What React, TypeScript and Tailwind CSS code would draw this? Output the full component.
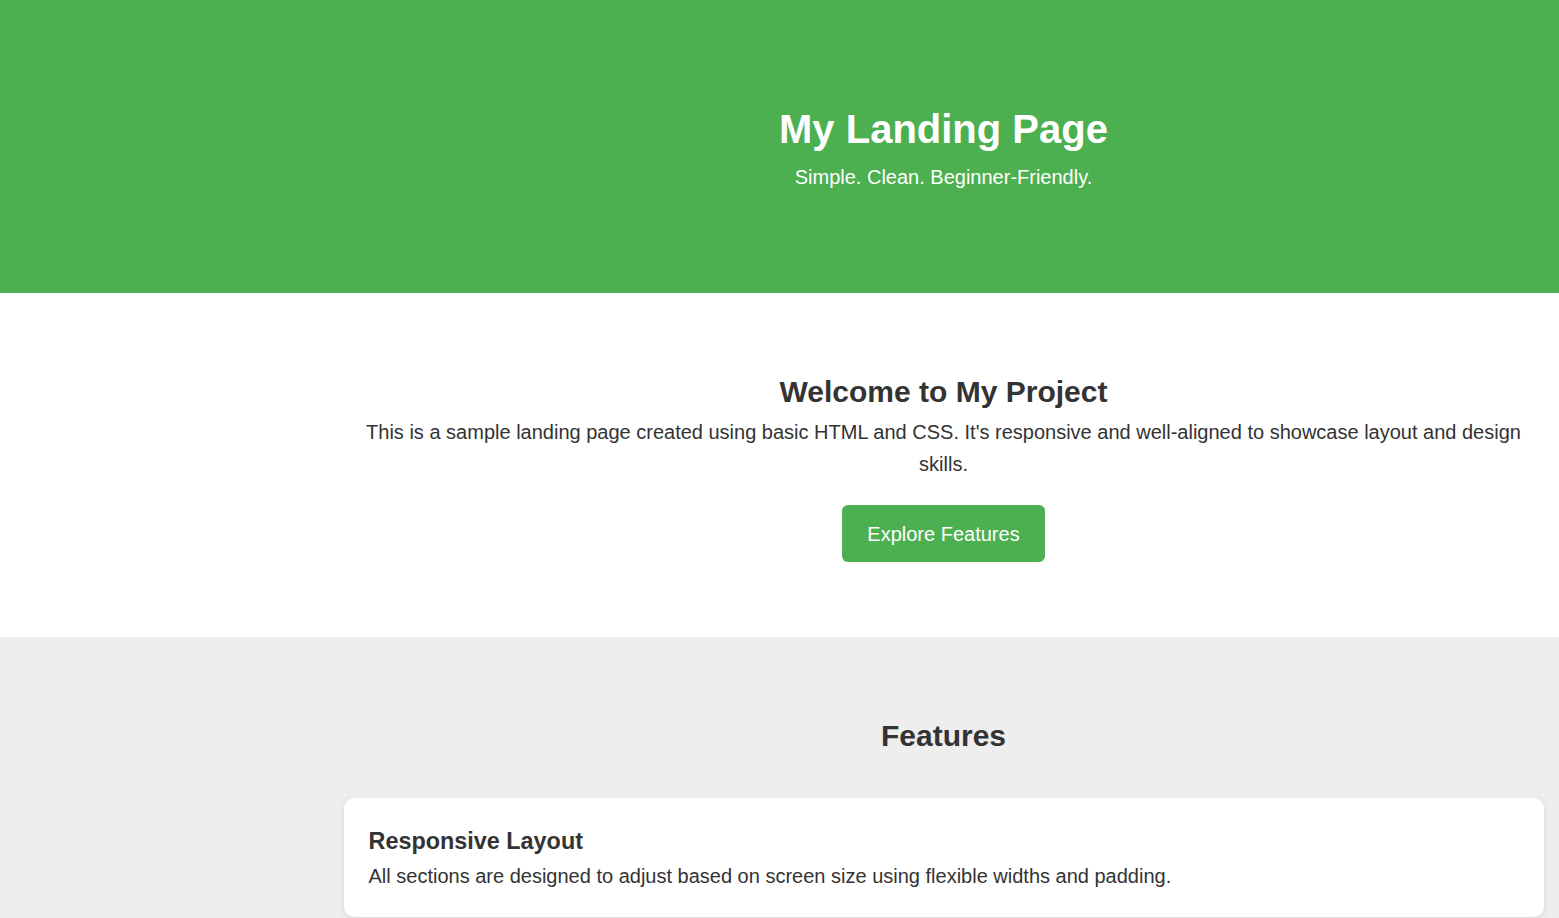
export default function App() {
  return (
    <div className="min-h-screen bg-white text-[#333] font-['Liberation_Sans',Arial,sans-serif] text-[20px] leading-[32px]">
      <header className="bg-[#4caf50] text-white pt-[97px] pb-[100px]">
        <div className="pl-[328px] text-center">
          <h1 className="text-[40px] leading-[64px] font-bold">My Landing Page</h1>
          <p className="text-[20px] leading-[32px]">Simple. Clean. Beginner-Friendly.</p>
        </div>
      </header>

      <section className="bg-white py-[75px]">
        <div className="pl-[328px]">
          <div className="max-w-[1200px] mx-auto text-center">
            <h2 className="text-[30px] leading-[48px] font-bold">Welcome to My Project</h2>
            <p>
              This is a sample landing page created using basic HTML and CSS. It's responsive and well-aligned to showcase layout and design skills.
            </p>
            <button className="mt-[25px] bg-[#4caf50] text-white px-[25px] py-[12.5px] rounded-[6px] text-[20px] leading-[32px]">
              Explore Features
            </button>
          </div>
        </div>
      </section>

      <section className="bg-[#eee] pt-[75px] pb-[75px]">
        <div className="pl-[328px]">
          <h2 className="text-center text-[30px] leading-[48px] font-bold">Features</h2>
          <div className="max-w-[1200px] mx-auto mt-[38px] flex flex-col gap-[25px]">
            <div className="bg-white rounded-[10px] p-[25px] shadow-[0_2px_6px_rgba(0,0,0,0.1)]">
              <h3 className="text-[23.4px] leading-[37.4px] font-bold">Responsive Layout</h3>
              <p>All sections are designed to adjust based on screen size using flexible widths and padding.</p>
            </div>
          </div>
        </div>
      </section>
    </div>
  );
}
